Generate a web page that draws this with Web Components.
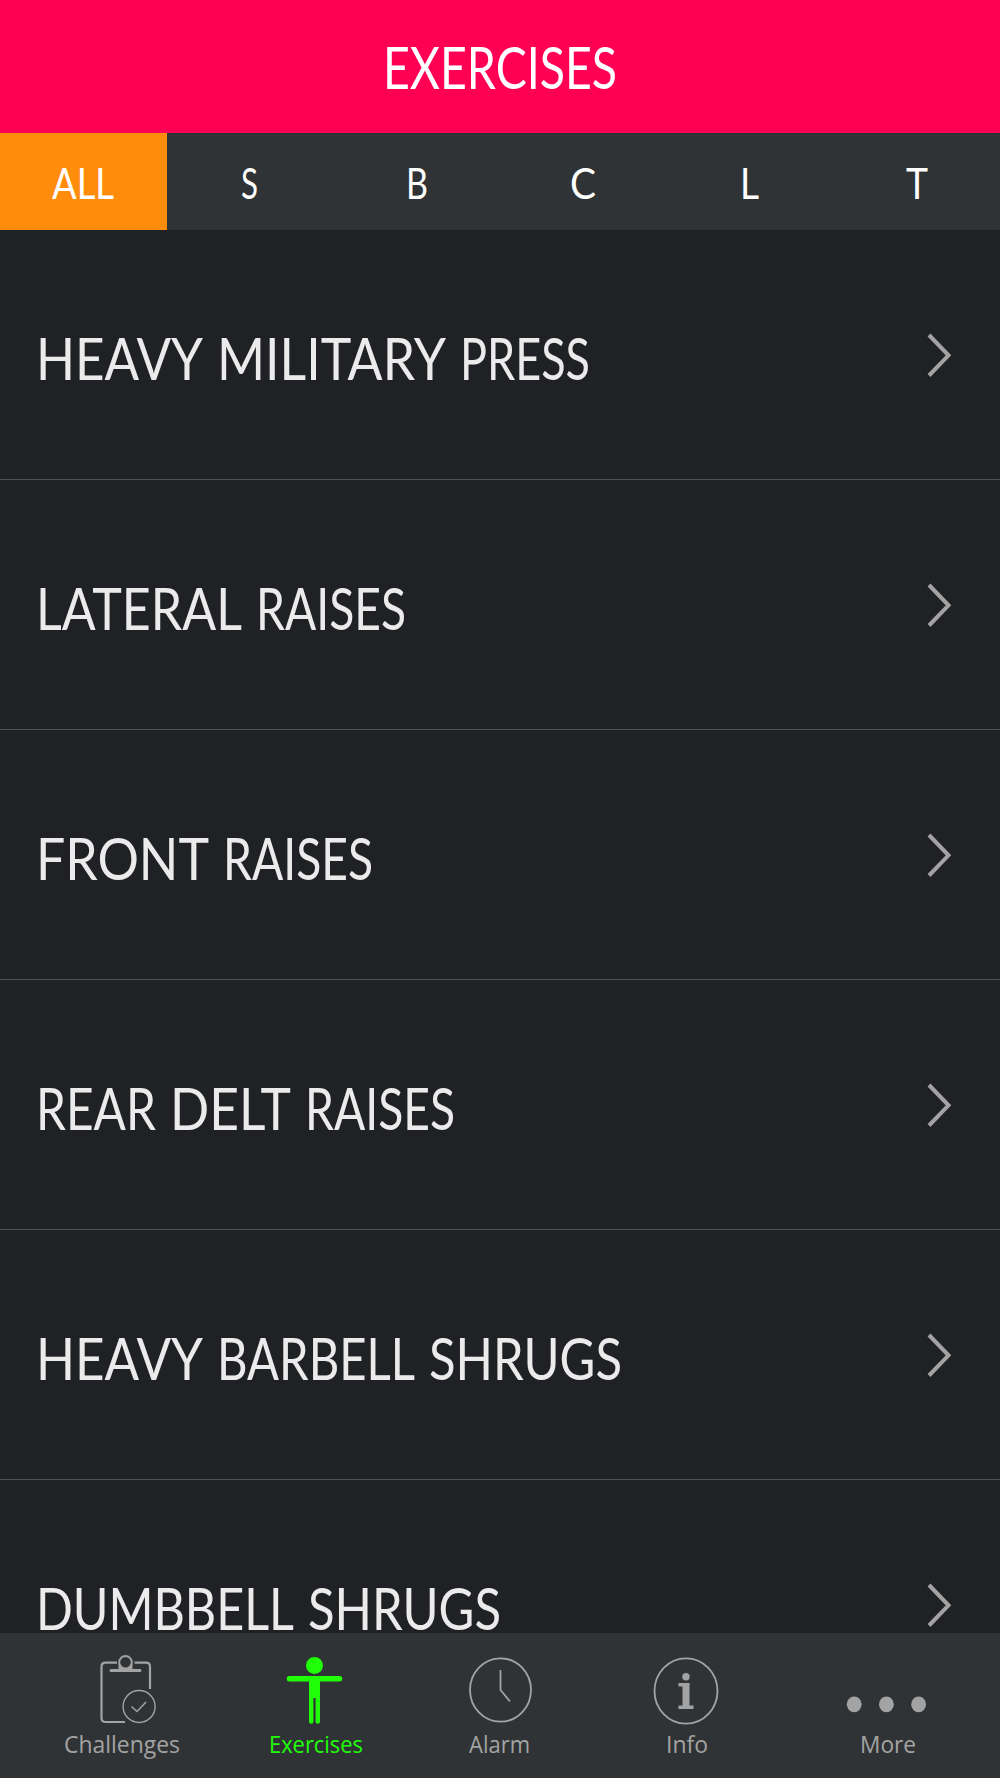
<!DOCTYPE html>
<html lang="en">
<head>
<meta charset="UTF-8">
<meta name="viewport" content="width=device-width, initial-scale=1.0">
<title>Exercises</title>
<style>
    :root{
        --color-bar: #303335;
        --color-back: #202124;
        --color-pink: #ff0055;
        --color-orange: #ff8c0a;
        --color-green: #20ff08;
        --color-grey: #a3a3a3;
    }
    body{
        margin:0;
        background-color: var(--color-back);
        overflow:hidden;
    }
</style>
</head>
<body>
<app-screen></app-screen>

<script>
// text squeezed or stretched to a given width, in px
class fitText extends HTMLElement{
    constructor(){
        super();
        this.attachShadow({mode: "open"});
    }

    connectedCallback(){
        this.shadowRoot.innerHTML = `
            <style>
                :host{
                    display:block;
                    width:${this.getAttribute("width")}px;
                    white-space:nowrap;
                }
                span{
                    display:inline-block;
                    transform-origin: left center;
                }
            </style>
            <span><slot></slot></span>
        `;
        const span = this.shadowRoot.querySelector("span");
        const scale = this.getAttribute("width") / span.getBoundingClientRect().width;
        span.style.transform = `scaleX(${scale})`;
    }
}

class appHeader extends HTMLElement{
    constructor(){
        super();
        this.attachShadow({mode: "open"});
    }

    connectedCallback(){
        this.shadowRoot.innerHTML = `
            <style>
                :host{
                    display:flex;
                    justify-content:center;
                    height:133px;
                    box-sizing:border-box;
                    padding-top:31px;
                    background-color: var(--color-pink);
                    color:#fff;
                    font:58.5px/70px Lato, sans-serif;
                }
            </style>
            <fit-text width="234"><slot></slot></fit-text>
        `;
    }
}

class filterTabs extends HTMLElement{
    constructor(){
        super();
        this.attachShadow({mode: "open"});
    }

    connectedCallback(){
        const tabs = [["ALL", 62], ["S", 17], ["B", 22], ["C", 26], ["L", 19], ["T", 22]];
        this.shadowRoot.innerHTML = `
            <style>
                :host{
                    display:grid;
                    grid-template-columns: repeat(6, 1fr);
                    height:97px;
                    background-color: var(--color-bar);
                    color:#fff;
                    font:42px/50px Lato, sans-serif;
                }
                div{
                    display:flex;
                    justify-content:center;
                    padding-top:25px;
                }
                .active{
                    background-color: var(--color-orange);
                }
            </style>
            ${tabs.map(([name, width], i) => `
                <div class="${i === 0 ? "active" : ""}"><fit-text width="${width}">${name}</fit-text></div>
            `).join("")}
        `;
    }
}

class exerciseRow extends HTMLElement{
    constructor(){
        super();
        this.attachShadow({mode: "open"});
    }

    connectedCallback(){
        // one width for each word of the name
        const widths = this.getAttribute("widths").split(" ");
        const words = this.getAttribute("name").split(" ");
        this.shadowRoot.innerHTML = `
            <style>
                :host{
                    display:flex;
                    justify-content:space-between;
                    height:250px;
                    box-sizing:border-box;
                    padding:92px 46px 0 36px;
                    border-bottom:1px solid #505154;
                    color:#ebebeb;
                    font:58.5px/70px Lato, sans-serif;
                }
                .name{
                    display:flex;
                    gap:14px;
                }
                svg{
                    width:28px;
                    height:46px;
                    margin-top:10px;
                    fill:none;
                    stroke: var(--color-grey);
                    stroke-width:4;
                }
            </style>
            <div class="name">
                ${words.map((word, i) => `<fit-text width="${widths[i]}">${word}</fit-text>`).join(" ")}
            </div>
            <svg viewBox="0 0 28 46"><path d="M3 3L22.5 23.3L3 43.5"/></svg>
        `;
    }
}

class tabItem extends HTMLElement{
    constructor(){
        super();
        this.attachShadow({mode: "open"});
    }

    connectedCallback(){
        this.shadowRoot.innerHTML = `
            <style>
                :host{
                    display:flex;
                    flex-direction:column;
                    align-items:center;
                    color: var(--color-grey);
                    font:24.5px/34px "Open Sans", sans-serif;
                }
                :host([active]){
                    color: var(--color-green);
                }
                ::slotted(svg){
                    display:block;
                    height:111px;
                    margin-bottom:-17px;
                    overflow:visible;
                }
            </style>
            <slot name="icon"></slot>
            <fit-text width="${this.getAttribute("width")}"><slot></slot></fit-text>
        `;
    }
}

class bottomBar extends HTMLElement{
    constructor(){
        super();
        this.attachShadow({mode: "open"});
    }

    connectedCallback(){
        this.shadowRoot.innerHTML = `
            <style>
                :host{
                    display:grid;
                    grid-template-columns: 244px 144px 223px 151px 252px;
                    height:145px;
                    overflow:hidden;
                    background-color: var(--color-bar);
                }
                svg{
                    width:80px;
                    fill:none;
                    stroke:currentColor;
                    stroke-width:1.8;
                }
                .solid{
                    fill:currentColor;
                    stroke:none;
                }
            </style>
            <tab-item width="116">
                <svg slot="icon" viewBox="82.5 1633 80 111">
                    <path d="M117.5 1662.7H106q-4 0-4 4V1718q0 4 4 4H125.5M135 1662.7H146.5q4 0 4 4V1689" stroke-width="2.2"/>
                    <circle cx="126" cy="1662.3" r="6.3" stroke-width="2"/>
                    <path class="solid" d="M119 1663.5q7 11 14 0V1669H141q2 1.5 0 3H111q-2-1.5 0-3H119Z"/>
                    <circle cx="139.6" cy="1706.5" r="16" stroke-width="1.4"/>
                    <path d="M132 1706.5L137.5 1711.5L146.5 1702" stroke-width="1.5"/>
                </svg>
                Challenges
            </tab-item>
            <tab-item width="94" active>
                <svg class="solid" slot="icon" viewBox="276 1633 80 111">
                    <circle cx="314.5" cy="1665.5" r="8.5"/>
                    <path d="M289.5 1676H339.5a2.8 2.8 0 0 1 0 5.6H320V1721.5a2.2 2.2 0 0 1-4.4 0V1698H313.4V1721.5a2.2 2.2 0 0 1-4.4 0V1681.6H289.5a2.8 2.8 0 0 1 0-5.6Z"/>
                </svg>
                Exercises
            </tab-item>
            <tab-item width="61">
                <svg slot="icon" viewBox="459.5 1633 80 111">
                    <ellipse cx="500" cy="1690" rx="30.5" ry="31.7"/>
                    <path d="M500 1670V1690L509.5 1701.5"/>
                </svg>
                Alarm
            </tab-item>
            <tab-item width="42">
                <svg slot="icon" viewBox="647 1633 80 111">
                    <ellipse cx="686" cy="1691" rx="31.5" ry="32.7"/>
                    <circle class="solid" cx="686" cy="1676.7" r="3.7"/>
                    <path class="solid" d="M678.5 1683H689.5V1705.5H693.5V1709H678.5V1705.5H682.5V1686.5H678.5Z"/>
                </svg>
                Info
            </tab-item>
            <tab-item width="56">
                <svg class="solid" slot="icon" viewBox="848 1633 80 111">
                    <ellipse cx="854.2" cy="1704.3" rx="7.4" ry="7.9"/>
                    <ellipse cx="886.4" cy="1704.3" rx="7.4" ry="7.9"/>
                    <ellipse cx="918.6" cy="1704.3" rx="7.4" ry="7.9"/>
                </svg>
                More
            </tab-item>
        `;
    }
}

class appScreen extends HTMLElement{
    constructor(){
        super();
        this.attachShadow({mode: "open"});
    }

    connectedCallback(){
        this.shadowRoot.innerHTML = `
            <style>
                :host{
                    display:flex;
                    flex-direction:column;
                    width:1000px;
                    height:1778px;
                    background-color: var(--color-back);
                }
                main{
                    flex:1;
                    min-height:0;
                    overflow:hidden;
                }
            </style>
            <app-header>EXERCISES</app-header>
            <filter-tabs></filter-tabs>
            <main>
                <exercise-row name="HEAVY MILITARY PRESS" widths="167 229 130"></exercise-row>
                <exercise-row name="LATERAL RAISES" widths="206 150"></exercise-row>
                <exercise-row name="FRONT RAISES" widths="173 150"></exercise-row>
                <exercise-row name="REAR DELT RAISES" widths="120 121 150"></exercise-row>
                <exercise-row name="HEAVY BARBELL SHRUGS" widths="167 198 193"></exercise-row>
                <exercise-row name="DUMBBELL SHRUGS" widths="258 193"></exercise-row>
            </main>
            <bottom-bar></bottom-bar>
        `;
    }
}

window.customElements.define("fit-text", fitText);
window.customElements.define("app-header", appHeader);
window.customElements.define("filter-tabs", filterTabs);
window.customElements.define("exercise-row", exerciseRow);
window.customElements.define("tab-item", tabItem);
window.customElements.define("bottom-bar", bottomBar);
window.customElements.define("app-screen", appScreen);
</script>
</body>
</html>
